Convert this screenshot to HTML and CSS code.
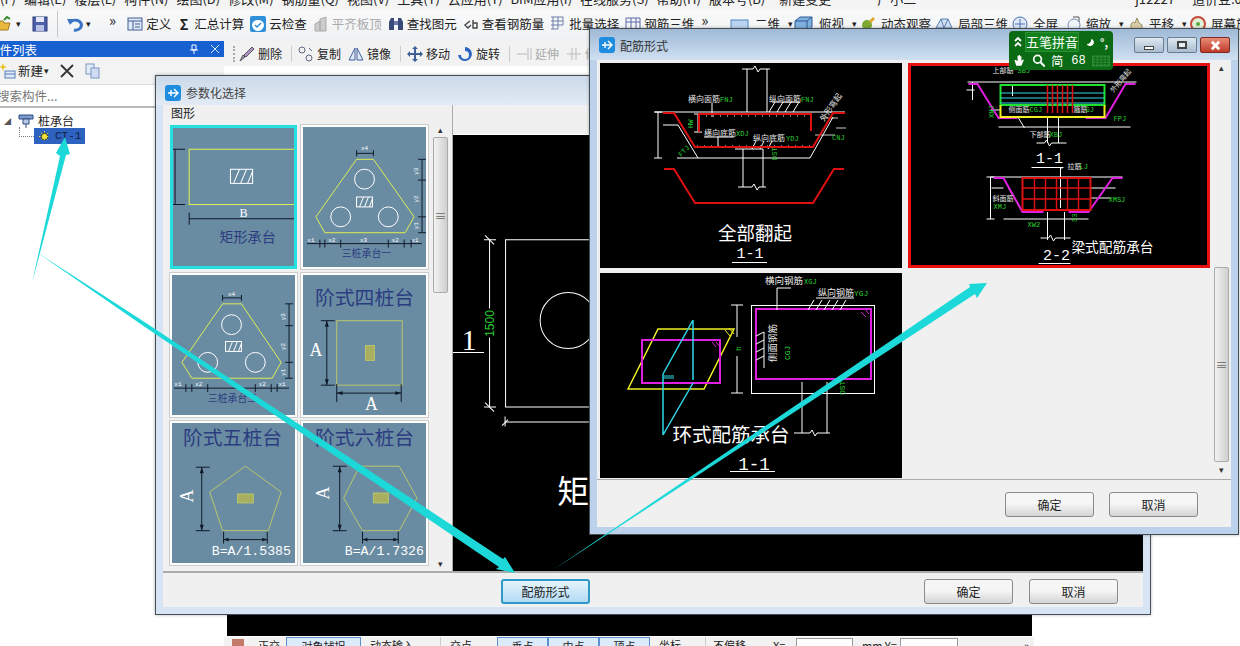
FILE: index.html
```html
<!DOCTYPE html>
<html lang="zh-CN">

<head>
    <meta charset="UTF-8">
    <title>参数化选择</title>
    <link rel="stylesheet" href="styles.css">
</head>

<body>
    <div class="app">
        <!-- 選單列，只露出文字下半部 -->
        <div class="menubar">
            <span>(F)</span><span>编辑(E)</span><span>楼层(L)</span><span>构件(N)</span><span>绘图(D)</span><span>修改(M)</span><span>钢筋量(Q)</span><span>视图(V)</span><span>工具(T)</span><span>云应用(Y)</span><span>BIM应用(I)</span><span>在线服务(S)</span><span>帮助(H)</span><span>版本号(B)</span><span class="menu-new">新建变更</span><span class="menu-user">广小二</span><span class="menu-login">j12227</span><span class="menu-coin">造价豆:0</span>
        </div>

        <!-- 主工具列 -->
        <div class="toolbar">
            <svg class="ic ic-open" viewBox="0 0 16 16"><path d="M0 5h6l1 2h6l-2 7H0z" fill="#e8b93c" stroke="#a37a1c"/><path d="M7 4l3-3 3 2" fill="none" stroke="#3b8b2e" stroke-width="2"/></svg>
            <span class="drop">▾</span>
            <svg class="ic ic-save" viewBox="0 0 16 16"><rect x="1" y="1" width="14" height="14" fill="#4d5fa8" stroke="#2c3a7a"/><rect x="4" y="1" width="8" height="5" fill="#e6e9f5"/><rect x="4" y="9" width="8" height="6" fill="#b7c1e6"/></svg>
            <span class="sep"></span>
            <svg class="ic" viewBox="0 0 16 16"><path d="M3 7a6 5 0 1 1 4 7" fill="none" stroke="#3c74c4" stroke-width="3"/><path d="M0 3l6 0-3 6z" fill="#3c74c4"/></svg>
            <span class="drop drop-b">▾</span>
            <span class="more">»</span>
            <span class="tool"><svg class="ic" viewBox="0 0 16 16"><rect x="1" y="2" width="14" height="12" fill="#dfe8f5" stroke="#44609a"/><path d="M1 5h14M6 5v9M8 8h5M8 11h5" stroke="#44609a" fill="none"/></svg>定义</span>
            <span class="tool"><b class="sigma">Σ</b>汇总计算</span>
            <span class="tool"><svg class="ic" viewBox="0 0 16 16"><rect x="0" y="0" width="16" height="16" rx="2" fill="#2f8fd8"/><path d="M2 9a6 5 0 0 1 12 0 4 4 0 0 1-12 0z" fill="#fff"/><path d="M5 9l2 2 4-4" fill="none" stroke="#2f8fd8" stroke-width="1.5"/></svg>云检查</span>
            <span class="tool is-off"><svg class="ic" viewBox="0 0 16 16"><path d="M2 15V8l5-3v10zM7 15V3l6-2v14z" fill="#ccc" stroke="#aaa"/></svg>平齐板顶</span>
            <span class="tool"><svg class="ic" viewBox="0 0 16 16"><path d="M1 14V6l2-4h3v12zM10 14V2h3l2 4v8z" fill="#3a4a78"/><rect x="6" y="5" width="4" height="4" fill="#6d7ba6"/></svg>查找图元</span>
            <span class="tool"><svg class="ic" viewBox="0 0 16 16"><path d="M7 5L2 9l3 3 3-3M10 4v8h4V7h-4" fill="none" stroke="#444" stroke-width="1.4"/></svg>查看钢筋量</span>
            <span class="tool"><svg class="ic" viewBox="0 0 16 16"><path d="M1 1h12M1 5h12M1 9h12M1 13h7M3 1v12M8 1v12M13 1v8" stroke="#6a7fa8" fill="none"/></svg>批量选择</span>
            <span class="tool"><svg class="ic" viewBox="0 0 16 16"><path d="M1 2h14v11H1zM1 6h14M6 2v11M11 2v11" stroke="#5a68a8" fill="none"/></svg>钢筋三维</span>
            <span class="more more-b">»</span>
            <div class="view-tools">
                <span class="tool"><svg class="ic ic-w" viewBox="0 0 20 16"><rect x="1" y="4" width="17" height="11" fill="#b9d3f0" stroke="#5585c4"/></svg>二维<span class="drop">▾</span></span>
                <span class="tool"><svg class="ic ic-w" viewBox="0 0 20 16"><path d="M1 5l5-4h12v10l-5 4H1z" fill="#7fb0e0" stroke="#2c5a92"/><path d="M1 5h12v10M13 5l5-4" fill="none" stroke="#2c5a92"/></svg>俯视<span class="drop">▾</span></span>
                <span class="tool"><svg class="ic" viewBox="0 0 16 16"><circle cx="7" cy="9" r="5" fill="#7fa832"/><path d="M9 5l4-4 2 2-4 4" fill="#e0a82c"/></svg>动态观察</span>
                <span class="tool"><svg class="ic ic-w" viewBox="0 0 20 16"><path d="M3 12l5-9h7l4 9z" fill="#cfe0f4" stroke="#5b7fb2"/><path d="M8 3l3 9M15 3l-4 9" stroke="#5b7fb2" fill="none"/></svg>局部三维</span>
                <span class="tool"><svg class="ic" viewBox="0 0 16 16"><circle cx="8" cy="8" r="7" fill="#dfe9f7" stroke="#4a6fb0"/><path d="M8 3v10M3 8h10" stroke="#4a6fb0"/></svg>全屏</span>
                <span class="tool"><svg class="ic" viewBox="0 0 16 16"><circle cx="9" cy="9" r="6" fill="#eef3fa" stroke="#7b93b8"/><path d="M8 1h6v5" fill="none" stroke="#555"/></svg>缩放<span class="drop">▾</span></span>
                <span class="tool"><svg class="ic" viewBox="0 0 16 16"><path d="M3 15V8l2-2 2 1 2-5 2 5 3 2v6z" fill="#d8cfa8" stroke="#9a8e60"/></svg>平移<span class="drop">▾</span></span>
                <span class="tool"><svg class="ic" viewBox="0 0 16 16"><circle cx="8" cy="8" r="7" fill="#dff0d8" stroke="#c84a3a" stroke-width="2"/><circle cx="8" cy="8" r="2" fill="#5aa83c"/></svg>屏幕旋转</span>
            </div>
        </div>

        <div class="work">
            <!-- 左側構件列表 -->
            <div class="side">
                <div class="side-head">
                    <span class="side-title">构件列表</span>
                    <span class="side-pin">
                        <svg class="pin" viewBox="0 0 10 10"><path d="M3 1h4v5H3zM1 6h8M5 6v4" fill="none" stroke="#fff"/></svg>
                        <svg class="pin" viewBox="0 0 10 10"><path d="M1 1l8 8M9 1l-8 8" stroke="#dfe8ff"/></svg>
                    </span>
                </div>
                <div class="side-tools">
                    <svg class="ic" viewBox="0 0 16 16"><path d="M3 0l1 3 3 1-3 1-1 3-1-3-3-1 3-1z" fill="#e8c21c"/><rect x="5" y="8" width="10" height="7" fill="#dfe9f7" stroke="#5a80b8"/><path d="M5 11h10" stroke="#5a80b8"/></svg>
                    <span class="side-new">新建</span><span class="drop">▾</span>
                    <svg class="ic" viewBox="0 0 16 16"><path d="M2 2l12 12M14 2L2 14" stroke="#333" stroke-width="1.8"/></svg>
                    <svg class="ic" viewBox="0 0 16 16"><rect x="2" y="1" width="8" height="10" fill="#e4ecf8" stroke="#7a96c4"/><rect x="7" y="5" width="8" height="10" fill="#cfdcf2" stroke="#7a96c4"/></svg>
                </div>
                <div class="side-search">搜索构件...</div>
                <div class="tree">
                    <div class="tree-row">
                        <span class="tree-arrow">◢</span>
                        <svg class="ic" viewBox="0 0 16 16"><path d="M1 2h14v4H1z" fill="#7c99c8" stroke="#2c4c86"/><path d="M5 6h6v5H5zM8 11v4" fill="#b8c8e4" stroke="#2c4c86"/></svg>
                        <span>桩承台</span>
                    </div>
                    <div class="tree-row tree-sub">
                        <span class="tree-line"></span>
                        <span class="tree-pick">
                            <svg class="gear" viewBox="0 0 12 12"><circle cx="6" cy="6" r="3.500" fill="#f4e23c" stroke="#3a3a10"/><path d="M6 0v12M0 6h12M2 2l8 8M10 2l-8 8" stroke="#f4e23c" stroke-dasharray="1.500 7"/></svg>
                            CT-1
                        </span>
                    </div>
                </div>
            </div>

            <!-- 繪圖區 -->
            <div class="main">
                <div class="edit-tools">
                    <span class="grip"></span>
                    <span class="tool"><svg class="ic" viewBox="0 0 16 16"><path d="M1 15l3-6 2 2zM5 9l8-8 2 2-8 8z" fill="#b094c8" stroke="#555"/></svg>删除</span>
                    <span class="sep-s"></span>
                    <span class="tool"><svg class="ic" viewBox="0 0 16 16"><circle cx="4" cy="4" r="3" fill="none" stroke="#5a6a80"/><circle cx="11" cy="12" r="3" fill="none" stroke="#5a6a80"/><path d="M11 2l3 3" stroke="#5a6a80"/></svg>复制</span>
                    <span class="tool"><svg class="ic" viewBox="0 0 16 16"><path d="M7 2L1 14h6zM9 2l6 12H9z" fill="#dfe8f5" stroke="#44609a"/></svg>镜像</span>
                    <span class="sep-s"></span>
                    <span class="tool"><svg class="ic" viewBox="0 0 16 16"><path d="M8 0l3 3H9v4h4V5l3 3-3 3V9H9v4h2l-3 3-3-3h2V9H3v2L0 8l3-3v2h4V3H5z" fill="#3e5f98"/></svg>移动</span>
                    <span class="tool"><svg class="ic" viewBox="0 0 16 16"><path d="M8 1v4a4 4 0 1 1-4 4H1a7 7 0 1 0 7-8z" fill="#2a66c0"/></svg>旋转</span>
                    <span class="sep-s"></span>
                    <span class="tool is-off"><svg class="ic" viewBox="0 0 16 16"><path d="M1 8h10M12 2v12M15 2v12" stroke="#bbb" fill="none"/></svg>延伸</span>
                    <span class="tool is-off"><svg class="ic" viewBox="0 0 16 16"><path d="M1 8h14M6 2v12M10 2v12" stroke="#bbb" fill="none"/></svg>修剪</span>
                </div>
                <div class="canvas"></div>
                <!-- 狀態工具列，視窗下緣只露出一小段 -->
                <div class="status-tools">
                    <span class="st-ic"></span>
                    <span>正交</span>
                    <span class="st-on">对象捕捉</span>
                    <span class="st-pad">动态输入</span>
                    <span class="st-sep"></span>
                    <span>交点</span>
                    <span class="st-on">垂点</span>
                    <span class="st-on">中点</span>
                    <span class="st-on">顶点</span>
                    <span class="st-pad">坐标</span>
                    <span class="st-sep"></span>
                    <span>不偏移</span>
                    <span>X=</span>
                    <span class="st-box"></span>
                    <span class="st-pad">mm Y=</span>
                    <span class="st-box"></span>
                    <span class="st-more">»</span>
                </div>
            </div>
        </div>

        <!-- 參數化選擇視窗 -->
        <div class="win win-param">
            <div class="win-title">
                <svg class="win-ic" viewBox="0 0 16 16"><rect width="16" height="16" rx="3" fill="#1e8de0"/><path d="M3 8h10M9 4l4 4-4 4M6 5v6" fill="none" stroke="#fff" stroke-width="1.400"/></svg>
                参数化选择
            </div>
            <div class="win-body">
                <div class="param-top">
                    <div class="gallery">
                        <div class="gallery-label">图形</div>
                        <div class="gallery-main">
                            <div class="thumbs">
                                <div class="thumb is-sel">
                                    <svg viewBox="173 128 120 137">
                                        <path d="M296 149H189V204H296" fill="none" stroke="#dfef50"/>
                                        <rect x="230" y="169" width="22" height="14" fill="none" stroke="#fff"/>
                                        <path d="M233 183l6-14M240 183l6-14M247 183l5-12" stroke="#fff"/>
                                        <path d="M172 149h13M175 149v55M172 204h13M189 212v12M189 218h104" stroke="#101828" fill="none"/>
                                        <text x="243" y="216" class="t-w t-serif" font-size="12">B</text>
                                        <text x="247" y="241" class="t-navy" font-size="14">矩形承台</text>
                                    </svg>
                                </div>
                                <div class="thumb">
                                    <svg viewBox="303 127 124 140">
                                        <path d="M357 159h17l41 58-9 16h-81l-9-16z" fill="none" stroke="#dfef50"/>
                                        <g fill="none" stroke="#fff"><circle cx="365" cy="179" r="10"/><circle cx="341" cy="217" r="10"/><circle cx="389" cy="217" r="10"/><rect x="357" y="197" width="16" height="10"/></g>
                                        <path d="M360 207l4-10M365 207l4-10M370 207l3-8" stroke="#fff"/>
                                        <path d="M357 150v6M374 150v6M357 153h17M423 159v74M419 159h8M419 180h8M419 217h8M419 233h8M307 244h116M320 240v8M325 240v8M341 240v8M389 240v8M405 240v8M412 240v8" stroke="#101828" fill="none"/>
                                        <text x="365" y="150" class="t-w t-mono" font-size="6">x4</text>
                                        <text x="311" y="242" class="t-w t-mono" font-size="6">x1</text>
                                        <text x="332" y="242" class="t-w t-mono" font-size="6">x2</text>
                                        <text x="364" y="242" class="t-w t-mono" font-size="6">x3</text>
                                        <text x="396" y="242" class="t-w t-mono" font-size="6">x2</text>
                                        <text x="416" y="242" class="t-w t-mono" font-size="6">x1</text>
                                        <text transform="translate(419 171) rotate(-90)" class="t-w t-mono" font-size="6">y3</text>
                                        <text transform="translate(419 199) rotate(-90)" class="t-w t-mono" font-size="6">y2</text>
                                        <text transform="translate(419 226) rotate(-90)" class="t-w t-mono" font-size="6">y1</text>
                                        <text x="367" y="258" class="t-navy" font-size="10">三桩承台一</text>
                                    </svg>
                                </div>
                                <div class="thumb">
                                    <svg viewBox="172 275 124 139">
                                        <path d="M223 303h19l40 59-9 16h-81l-10-16z" fill="none" stroke="#dfef50"/>
                                        <g fill="none" stroke="#fff"><circle cx="232" cy="324" r="10"/><circle cx="208" cy="362" r="10"/><circle cx="256" cy="362" r="10"/><rect x="226" y="341" width="16" height="10"/></g>
                                        <path d="M229 351l4-10M234 351l4-10M239 351l3-8" stroke="#fff"/>
                                        <path d="M223 294v6M242 294v6M223 297h19M290 303v75M286 303h8M286 325h8M286 362h8M286 378h8M174 388h116M186 384v8M192 384v8M208 384v8M256 384v8M272 384v8M278 384v8" stroke="#101828" fill="none"/>
                                        <text x="232" y="295" class="t-w t-mono" font-size="6">x4</text>
                                        <text x="178" y="386" class="t-w t-mono" font-size="6">x1</text>
                                        <text x="199" y="386" class="t-w t-mono" font-size="6">x2</text>
                                        <text x="263" y="386" class="t-w t-mono" font-size="6">x2</text>
                                        <text x="283" y="386" class="t-w t-mono" font-size="6">x1</text>
                                        <text transform="translate(286 316) rotate(-90)" class="t-w t-mono" font-size="6">y3</text>
                                        <text transform="translate(286 346) rotate(-90)" class="t-w t-mono" font-size="6">y2</text>
                                        <text transform="translate(286 372) rotate(-90)" class="t-w t-mono" font-size="6">y1</text>
                                        <text x="233" y="402" class="t-navy" font-size="10">三桩承台二</text>
                                    </svg>
                                </div>
                                <div class="thumb">
                                    <svg viewBox="303 275 124 139">
                                        <rect x="337" y="320" width="66" height="65" fill="none" stroke="#b8c66c"/>
                                        <rect x="366" y="345" width="9" height="15" fill="#a8b060" stroke="#b8c66c"/>
                                        <path d="M321 320h14M327 320v65M321 385h14M337 384v18M402 384v18M337 393h65" stroke="#101828" fill="none"/>
                                        <path d="M327 320l-2 6h4zM327 385l-2-6h4zM337 393l6-2v4zM402 393l-6-2v4z" fill="#101828"/>
                                        <text x="365" y="304" class="t-navy" font-size="20">阶式四桩台</text>
                                        <text x="316" y="356" class="t-w t-serif" font-size="18">A</text>
                                        <text x="372" y="410" class="t-w t-serif" font-size="18">A</text>
                                    </svg>
                                </div>
                                <div class="thumb">
                                    <svg viewBox="172 423 124 140">
                                        <path d="M246 466l36 26-13 39h-46l-13-39z" fill="none" stroke="#b8c66c"/>
                                        <rect x="238" y="494" width="16" height="9" fill="#a8b060" stroke="#b8c66c"/>
                                        <path d="M196 467h14M202 467v64M196 531h14M224 532v12M268 532v12M224 540h44" stroke="#101828" fill="none"/>
                                        <path d="M202 467l-2 6h4zM202 531l-2-6h4zM224 540l5-2v4zM268 540l-5-2v4z" fill="#101828"/>
                                        <text transform="translate(193 496) rotate(-90)" class="t-w t-serif" font-size="18">A</text>
                                        <text x="252" y="556" class="t-w t-mono" font-size="13.300">B=A/1.5385</text>
                                        <text x="233" y="445" class="t-navy" font-size="20">阶式五桩台</text>
                                    </svg>
                                </div>
                                <div class="thumb">
                                    <svg viewBox="303 423 124 140">
                                        <path d="M360 466h40l18 32-18 33h-37l-19-33z" fill="none" stroke="#b8c66c"/>
                                        <rect x="374" y="493" width="15" height="10" fill="#a8b060" stroke="#b8c66c"/>
                                        <path d="M333 466h14M340 466v65M333 531h14M363 532v12M399 532v12M363 540h36" stroke="#101828" fill="none"/>
                                        <path d="M340 466l-2 6h4zM340 531l-2-6h4zM363 540l5-2v4zM399 540l-5-2v4z" fill="#101828"/>
                                        <text transform="translate(329 493) rotate(-90)" class="t-w t-serif" font-size="18">A</text>
                                        <text x="385" y="556" class="t-w t-mono" font-size="13.300">B=A/1.7326</text>
                                        <text x="365" y="445" class="t-navy" font-size="20">阶式六桩台</text>
                                    </svg>
                                </div>
                            </div>
                            <div class="vscroll">
                                <span class="vs-up">▴</span>
                                <span class="vs-thumb vs-thumb-a">≡</span>
                                <span class="vs-rest"></span>
                                <span class="vs-down">▾</span>
                            </div>
                        </div>
                    </div>
                    <div class="preview">
                        <div class="preview-head"></div>
                        <!-- 預覽圖，右半被配筋形式視窗擋住 -->
                        <svg class="preview-draw" viewBox="453 135 689 435">
                            <g fill="none" stroke="#fff">
                                <path d="M505.500 239.500h335v167h-335zM484 239.500h12M484 406.500h12M489.500 239v69M489.500 337v70M453 352h31M505 421.500h335M505 416v10"/>
                                <path d="M485 235l9 9M485 402l9 9M502 425l6-6"/>
                                <circle cx="568" cy="320" r="28"/>
                            </g>
                            <text transform="translate(494 323) rotate(-90)" class="t-green t-sans" font-size="12">1500</text>
                            <text x="469" y="350" class="t-w t-serif" font-size="30">1</text>
                            <text x="557" y="502" class="t-w t-start" font-size="32">矩形承台</text>
                        </svg>
                    </div>
                </div>
                <div class="win-foot foot-param">
                    <button class="btn btn-focus">配筋形式</button>
                    <span class="foot-space"></span>
                    <button class="btn">确定</button>
                    <button class="btn">取消</button>
                </div>
            </div>
        </div>

        <!-- 配筋形式視窗 -->
        <div class="win win-rebar">
            <div class="win-title title-rebar">
                <svg class="win-ic" viewBox="0 0 16 16"><rect width="16" height="16" rx="3" fill="#1e8de0"/><path d="M3 8h10M9 4l4 4-4 4M6 5v6" fill="none" stroke="#fff" stroke-width="1.400"/></svg>
                配筋形式
                <span class="win-btns">
                    <span class="wb"><i class="wb-min"></i></span>
                    <span class="wb"><i class="wb-max"></i></span>
                    <span class="wb wb-close">
                        <svg viewBox="0 0 12 12"><path d="M2 2l8 8M10 2l-8 8" stroke="#fff" stroke-width="3"/></svg>
                    </span>
                </span>
            </div>
            <div class="win-body">
                <div class="rebar-main">
                    <div class="rebar-grid">
                        <div class="rb">
                            <svg viewBox="600 63 302 205">
                                <g fill="none" stroke="#fff">
                                    <path d="M655 112h190M742 69h11l2-3 3 6 2-3h10M747 69v43M767 69v43M658 112v46M654 112h8M654 158h8"/>
                                    <path d="M663 125h15l20 33h112l23-41M677 158h21M698 114v18M694 114h8M694 132h8"/>
                                    <path d="M743 149v38M763 149v38M738 187h14l2-3 3 6 2-3h7M735 149h28M712 103v14M769 112l6-10M777 112l6-10M785 112l6-10M793 112l6-10M772 102h28"/>
                                    <path d="M718 137v10M704 137h30M752 149l4-8M760 149l4-8M768 149l4-8"/>
                                    <path d="M824 118h14M836 128h10M826 125l-6 10M815 135h20" stroke-width="0.800"/>
                                </g>
                                <path d="M699 116h112M697 146h115" fill="none" stroke="#fff" stroke-dasharray="1 6"/>
                                <polyline points="663,113 674,113 695,147 813,147 833,113 845,113" fill="none" stroke="#e01010" stroke-width="2"/>
                                <polyline points="699,132 699,114 811,114 811,131" fill="none" stroke="#e01010" stroke-width="2"/>
                                <polyline points="664,169 674,169 695,203 813,203 834,169 844,169" fill="none" stroke="#e01010" stroke-width="2"/>
                                <text x="688" y="102" class="t-lb" font-size="8">横向面筋</text><text x="720" y="102" class="t-green t-lb" font-size="7">FNJ</text>
                                <text x="769" y="102" class="t-lb" font-size="8">纵向面筋</text><text x="801" y="102" class="t-green t-lb" font-size="7">FNJ</text>
                                <text x="704" y="136" class="t-lb" font-size="8">横向底筋</text><text x="736" y="136" class="t-green t-lb" font-size="7">XDJ</text>
                                <text x="753" y="141" class="t-lb" font-size="8">纵向底筋</text><text x="786" y="141" class="t-green t-lb" font-size="7">YDJ</text>
                                <text x="832" y="140" class="t-green t-lb" font-size="7">CNJ</text>
                                <text transform="translate(693 128) rotate(-90)" class="t-green t-lb" font-size="7">HW</text>
                                <text transform="translate(777 160) rotate(-90)" class="t-green t-lb" font-size="7">DST</text>
                                <text transform="translate(681 157) rotate(-45)" class="t-green t-lb" font-size="7">FTJ</text>
                                <text transform="translate(824 122) rotate(-55)" class="t-lb" font-size="8">外形弯起</text>
                                <text x="755" y="240" class="t-w" font-size="18.500">全部翻起</text>
                                <text x="750" y="258" class="t-w t-mono" font-size="15">1-1</text>
                                <path d="M732 262.500h35" stroke="#fff"/>
                            </svg>
                        </div>
                        <div class="rb is-picked">
                            <svg viewBox="908 63 301 205">
                                <path d="M967 82h169M998 127h132M966 90h8M972 82v18M1000 110h-10M1012 84v12M1047 118v25M1058 118v25M1036 143h8l2-3 3 6 2-3h15M1018 118l6 10" fill="none" stroke="#fff"/>
                                <polyline points="968,84 977,84 998,118 1017,118" fill="none" stroke="#e020e0" stroke-width="2"/>
                                <polyline points="1085,118 1105,118 1125,84 1135,84" fill="none" stroke="#e020e0" stroke-width="2"/>
                                <rect x="1000" y="85" width="104" height="20" fill="none" stroke="#20e030" stroke-width="2"/>
                                <path d="M1000 105v12h104v-12" fill="none" stroke="#f0f020" stroke-width="2"/>
                                <path d="M1000 93h104M1000 98h104M1000 103h104" stroke="#30d8e8"/>
                                <path d="M1047 85v28M1052 85v28M1057 85v28M1062 85v28M1067 85v28M1072 85v28" stroke="#e01010" stroke-width="1.500"/>
                                <text x="992" y="73" class="t-lb" font-size="7">上部筋</text><text x="1017" y="73" class="t-green t-lb" font-size="7">SBJ</text>
                                <text x="1008" y="112" class="t-lb" font-size="7">侧面筋</text><text x="1029" y="112" class="t-green t-lb" font-size="7">CGJ</text>
                                <text x="1073" y="112" class="t-lb" font-size="7">箍筋</text><text x="1085" y="112" class="t-green t-lb" font-size="7">GJ</text>
                                <text x="1029" y="137" class="t-lb" font-size="7">下部筋</text><text x="1049" y="137" class="t-green t-lb" font-size="7">XBJ</text>
                                <text x="1113" y="121" class="t-green t-lb" font-size="7">FPJ</text>
                                <text transform="translate(993 118) rotate(-90)" class="t-green t-lb" font-size="7">XNJ</text>
                                <text transform="translate(1113 93) rotate(-50)" class="t-lb" font-size="7">外形弯起</text>
                                <text x="1049" y="163" class="t-w t-mono" font-size="15">1-1</text>
                                <path d="M1031 167.500h32" stroke="#fff"/>
                                <path d="M990 177h132M986 177h8M986 219h8M990 177v42M1003 188h-12M1022 212l-14-24M1003 219h85M1047 212v28M1064 212v28M1040 238h8l2-3 3 6 2-3h15M1090 188h25M1090 198h20M1062 168h-2v40" fill="none" stroke="#fff"/>
                                <polyline points="993,178 1003,178 1022,212 1043,212" fill="none" stroke="#e020e0" stroke-width="2"/>
                                <polyline points="1068,212 1088,212 1112,178 1122,178" fill="none" stroke="#e020e0" stroke-width="2"/>
                                <rect x="1022" y="178" width="68" height="32" fill="none" stroke="#e01010" stroke-width="2"/>
                                <path d="M1034 178v32M1045 178v32M1056 178v32M1067 178v32M1078 178v32M1022 188h68M1022 199h68" stroke="#e01010" stroke-width="1.400"/>
                                <text x="1067" y="169" class="t-lb" font-size="7">拉筋</text><text x="1079" y="169" class="t-green t-lb" font-size="7">LJ</text>
                                <text x="992" y="201" class="t-lb" font-size="7">斜面筋</text><text x="993" y="209" class="t-green t-lb" font-size="7">XMJ</text>
                                <text x="1108" y="202" class="t-green t-lb" font-size="7">XMSJ</text>
                                <text x="1027" y="227" class="t-green t-lb" font-size="7">XW2</text>
                                <text transform="translate(1076 222) rotate(-90)" class="t-green t-lb" font-size="7">S3</text>
                                <text x="1056" y="260" class="t-w t-mono" font-size="15">2-2</text>
                                <path d="M1038 263.500h32" stroke="#fff"/>
                                <text x="1112" y="252" class="t-w" font-size="13.700">梁式配筋承台</text>
                            </svg>
                        </div>
                        <div class="rb">
                            <svg viewBox="600 273 302 205">
                                <path d="M628 389l30-60h76l-30 60z" fill="none" stroke="#f0f020" stroke-width="1.500"/>
                                <rect x="642" y="340" width="78" height="43" fill="none" stroke="#e020e0" stroke-width="2"/>
                                <path d="M693 320v60M693 320l-30 54M663 374v61M663 435l30-52" fill="none" stroke="#30d8e8" stroke-width="1.500"/>
                                <path d="M664 376h10M664 378h10" stroke="#30d8e8"/>
                                <path d="M725 330l5 6M729 328l5 6" stroke="#f0f020"/>
                                <path d="M712 342l4 5M716 342l4 5" stroke="#e020e0"/>
                                <rect x="751.500" y="305.500" width="123" height="88" fill="none" stroke="#fff"/>
                                <rect x="756" y="309" width="115" height="70" fill="none" stroke="#e020e0" stroke-width="2"/>
                                <path d="M864 308l5 6M861 312l5 5" stroke="#e020e0"/>
                                <path d="M802 382v51M827 382v51M794 433h16l2-3 3 6 2-3h13M737 305v32M737 356v37M731 305h12M731 393h12M777 288v22M777 288h14M808 310l6-10M816 310l6-10M824 310l6-10M832 310l6-10M840 310l6-10M816 298h38M756 336l8-4v36M756 344l8-4M756 352l8-4M756 360l8-4" fill="none" stroke="#fff"/>
                                <text x="765" y="284" class="t-lb" font-size="9.500">横向钢筋</text><text x="804" y="284" class="t-green t-lb" font-size="7">XGJ</text>
                                <text x="818" y="296" class="t-lb" font-size="9">纵向钢筋</text><text x="854" y="296" class="t-green t-lb" font-size="8">YGJ</text>
                                <text transform="translate(776 362) rotate(-90)" class="t-lb" font-size="9.500">侧面钢筋</text>
                                <text transform="translate(790 360) rotate(-90)" class="t-green t-lb" font-size="8">CGJ</text>
                                <text transform="translate(741 351) rotate(-90)" class="t-green t-lb" font-size="8">h</text>
                                <text transform="translate(845 395) rotate(-90)" class="t-green t-lb" font-size="8">DST</text>
                                <text x="731" y="442" class="t-w" font-size="19.500">环式配筋承台</text>
                                <text x="754" y="470" class="t-w t-mono" font-size="17.500">1-1</text>
                                <path d="M730 471.500h45" stroke="#fff"/>
                            </svg>
                        </div>
                    </div>
                    <div class="vscroll vs-rebar">
                        <span class="vs-up">▴</span>
                        <span class="vs-gap"></span>
                        <span class="vs-thumb vs-thumb-b">≡</span>
                        <span class="vs-down">▾</span>
                    </div>
                </div>
                <div class="win-foot foot-rebar">
                    <span class="foot-space"></span>
                    <button class="btn">确定</button>
                    <button class="btn">取消</button>
                </div>
            </div>
        </div>

        <!-- 輸入法浮動工具列 -->
        <div class="ime">
            <div class="ime-row">
                <svg class="ime-fold" viewBox="0 0 10 14"><path d="M2 6l3-3 3 3M2 11l3-3 3 3" fill="none" stroke="#fff" stroke-width="1.800"/></svg>
                <span class="ime-name">五笔拼音</span>
                <svg class="ime-moon" viewBox="0 0 12 12"><path d="M7 1a5 5 0 1 1-6 7 6 6 0 0 0 6-7z" fill="#fff"/></svg>
                <span class="ime-sym">°,</span>
            </div>
            <div class="ime-row ime-row-b">
                <svg class="ime-ic" viewBox="0 0 16 16"><path d="M3 8l2 6h6l3-7-2 0-1 2V3H9.500v5V1.500H8V8V2.500H6.500V9L4 7z" fill="#fff"/></svg>
                <svg class="ime-ic" viewBox="0 0 16 16"><circle cx="6.500" cy="6.500" r="4.500" fill="none" stroke="#fff" stroke-width="2"/><path d="M10 10l5 5" stroke="#fff" stroke-width="2.500"/></svg>
                <span>简</span>
                <span class="ime-full">68</span>
                <svg class="ime-key" viewBox="0 0 20 12"><rect width="20" height="12" fill="#2f8a35"/><path d="M1 3h18M1 6h18M1 9h18M4 1v10M8 1v10M12 1v10M16 1v10" stroke="#0b6a14"/></svg>
            </div>
        </div>

        <!-- 手動標註的青色箭頭 -->
        <svg class="arrows" viewBox="0 0 1240 646">
            <path d="M32 283L60 156 56 153 65 137 70 154 66 155z" fill="#1cd8d8"/>
            <path d="M35 251L146 323 503 559 505 557 515 573 496 569 499 567 145 327z" fill="#1cd8d8"/>
            <path d="M553 570L970 287 969 284 987 283 977 298 975 294z" fill="#1cd8d8"/>
        </svg>
    </div>
</body>

</html>
```

FILE: styles.css
```css
/* 基本樣式設定 */
* {
    box-sizing: border-box;
}

body {
    margin: 0;
    font-family: "Noto Sans CJK SC", "Liberation Sans", sans-serif;
    font-size: 12px;
    color: #222;
}

.app {
    position: relative;
    width: 1240px;
    height: 646px;
    overflow: hidden;
    background: #fff;
    display: flex;
    flex-direction: column;
}

.ic {
    width: 16px;
    height: 16px;
    flex: none;
}

.ic-w {
    width: 20px;
}

.drop {
    font-size: 9px;
    margin: 0 3px;
}

/* 選單列 */
.menubar {
    height: 10px;
    flex: none;
    overflow: hidden;
    display: flex;
    align-items: flex-end;
    gap: 8px;
    padding-bottom: 3px;
    background: #f4f4f4;
    font-size: 13px;
    line-height: 17px;
}

.menubar span {
    flex: none;
}

.menu-new {
    margin-left: 6px;
}

.menu-user {
    margin-left: 38px;
}

.menu-login {
    margin-left: 211px;
}

.menu-coin {
    margin-left: 9px;
}

/* 工具列 */
.toolbar {
    height: 31px;
    flex: none;
    display: flex;
    align-items: center;
    padding-bottom: 4px;
    white-space: nowrap;
    background: linear-gradient(#fafafa, #eef0f3);
    font-size: 12.500px;
}

.ic-open {
    margin-left: -3px;
}

.ic-save {
    margin-left: 8px;
}

.sep {
    width: 1px;
    height: 26px;
    margin: 0 9px;
    background: #c8c8c8;
}

.drop-b {
    margin-right: 6px;
}

.more {
    font-size: 15px;
    margin: -8px 11px 0 12px;
}

.more-b {
    margin: -8px 10px 0 1px;
}

.tool {
    display: flex;
    align-items: center;
    gap: 3px;
    margin-right: 6px;
    flex: none;
}

.is-off {
    color: #aaa;
}

.sigma {
    width: 14px;
    font-size: 14px;
    text-align: center;
}

/* 右半工具列，各欄寬度固定 */
.view-tools {
    display: grid;
    grid-template-columns: 64px 66px 73px 79px 53px 63px 62px 60px;
    margin-left: auto;
    width: 510px;
    flex: none;
}

.view-tools .tool {
    margin-right: 0;
    gap: 5px;
}

/* 工作區 */
.work {
    flex: 1;
    min-height: 0;
    display: flex;
}

.side {
    width: 224px;
    flex: none;
    background: #fff;
}

.side-head {
    height: 16px;
    display: flex;
    align-items: center;
    background: #1660d2;
    color: #fff;
    font-size: 12.500px;
    overflow: hidden;
}

.side-title {
    margin-left: -13px;
    flex: 1;
}

.side-pin {
    display: flex;
    gap: 11px;
    margin-right: 4px;
}

.pin {
    width: 10px;
    height: 10px;
}

.side-tools {
    height: 27px;
    display: flex;
    align-items: center;
    gap: 2px;
    background: #f3f3f3;
    font-size: 12.500px;
}

.side-tools .ic:nth-of-type(1) {
    margin-left: 0;
}

.side-tools .ic:nth-of-type(2) {
    margin-left: 5px;
}

.side-tools .ic:nth-of-type(3) {
    margin-left: 7px;
}

.side-tools .drop {
    margin: 0 3px 0 -1px;
}

.side-search {
    height: 24px;
    line-height: 22px;
    margin-left: -3px;
    border-bottom: 2px solid #bbb;
    border-top: 1px solid #ddd;
    color: #777;
    font-size: 12.500px;
}

.tree {
    padding: 5px 0 0 4px;
}

.tree-row {
    height: 15px;
    display: flex;
    align-items: center;
    gap: 4px;
}

.tree-row .ic {
    margin-left: 3px;
}

.tree-arrow {
    font-size: 7px;
    color: #555;
}

.tree-sub {
    height: 16px;
    padding-left: 15px;
    gap: 0;
}

.tree-line {
    width: 15px;
    height: 10px;
    margin-top: -9px;
    border-left: 1px dotted #777;
    border-bottom: 1px dotted #777;
}

.tree-pick {
    width: 51px;
    height: 16px;
    display: flex;
    align-items: center;
    gap: 5px;
    padding-left: 5px;
    background: #2e62c0;
    color: #10203c;
    font-family: "Liberation Mono", monospace;
    font-size: 11px;
}

.gear {
    width: 11px;
    height: 11px;
}

.main {
    width: 810px;
    flex: none;
    display: flex;
    flex-direction: column;
}

.edit-tools {
    height: 25px;
    flex: none;
    display: flex;
    align-items: center;
    gap: 4px;
    padding-left: 9px;
    white-space: nowrap;
    background: #f2f2f2;
    font-size: 12px;
}

.edit-tools .tool {
    margin-right: 3px;
}

.grip {
    width: 2px;
    height: 16px;
    border-left: 2px dotted #aaa;
}

.sep-s {
    width: 1px;
    height: 16px;
    margin: 0 2px;
    background: #ccc;
}

.canvas {
    flex: 1;
    margin: 16px 2px 1px 3px;
    background: #000;
}

.status-tools {
    height: 18px;
    flex: none;
    margin-bottom: -9px;
    padding-left: 8px;
    display: grid;
    grid-template-columns: 26px 28px 75px 79px 10px 47px 51px 51px 51px 55px 8px 60px 23px 57px 47px 58px 1fr;
    white-space: nowrap;
    background: #f2f2f2;
    font-size: 11px;
}

.st-ic {
    width: 12px;
    height: 12px;
    margin-top: 2px;
    background: #c47a6a;
}

.st-on {
    border: 1px solid #5b8fd0;
    background: #dcebfa;
    text-align: center;
}

.st-pad {
    padding-left: 9px;
}

.st-sep {
    width: 1px;
    height: 16px;
    background: #ccc;
}

.st-box {
    height: 16px;
    margin-top: 1px;
    border: 1px solid #999;
    background: #fff;
}

.st-more {
    padding-left: 66px;
}

/* 浮動視窗 */
.win {
    position: absolute;
    display: flex;
    flex-direction: column;
    border: 1px solid #444c55;
    background: #d6e4f3;
    box-shadow: 0 0 3px rgba(0, 0, 0, 0.3);
}

.win-param {
    left: 155px;
    top: 75px;
    width: 996px;
    height: 540px;
}

.win-rebar {
    left: 589px;
    top: 28px;
    width: 650px;
    height: 507px;
    background: #bcd2ea;
}

.win-title {
    height: 29px;
    flex: none;
    display: flex;
    align-items: center;
    gap: 5px;
    padding: 4px 0 0 9px;
    color: #444;
    background: linear-gradient(#cbd9e8, #e2ebf5);
}

.title-rebar {
    height: 31px;
    padding-top: 1px;
    background: linear-gradient(#9fb9d6, #cfe0f1);
    color: #333;
}

.win-ic {
    width: 16px;
    height: 16px;
}

.win-btns {
    margin-left: auto;
    margin-right: 8px;
    display: flex;
    gap: 3px;
}

.wb {
    width: 30px;
    height: 16px;
    display: flex;
    align-items: center;
    justify-content: center;
    border: 1px solid #6d7d90;
    border-radius: 2px;
    background: linear-gradient(#dfe8f2, #a9bcd0);
}

.wb-min {
    width: 10px;
    height: 4px;
    margin-top: 5px;
    border: 1px solid #444;
    background: #fff;
}

.wb-max {
    width: 10px;
    height: 8px;
    border: 2px solid #444;
    background: #e6eef6;
}

.wb-close {
    border-color: #7a2a20;
    background: linear-gradient(#e88c78, #c03a28);
}

.wb-close svg {
    width: 11px;
    height: 11px;
}

.win-body {
    flex: 1;
    min-height: 0;
    margin: 0 7px 7px;
    display: flex;
    flex-direction: column;
    background: #f0f0f0;
}

.param-top {
    flex: 1;
    min-height: 0;
    display: flex;
}

.win-foot {
    flex: none;
    display: flex;
    align-items: center;
    background: #f0f0f0;
}

.foot-param {
    height: 36px;
    padding: 2px 25px 0 338px;
    border-top: 2px solid #aaa;
    gap: 16px;
}

.foot-rebar {
    height: 48px;
    padding: 2px 33px 0 0;
    gap: 15px;
    border-top: 1px solid #aaa;
}

.foot-space {
    flex: 1;
}

.btn {
    width: 89px;
    height: 25px;
    padding: 0;
    font: inherit;
    color: #222;
    border: 1px solid #8a8a8a;
    border-radius: 3px;
    background: linear-gradient(#f6f6f6 45%, #d4d4d4);
}

.btn-focus {
    border: 2px solid #2f9ac8;
    background: linear-gradient(#e6f4fc, #b4daf4);
}

/* 圖形清單 */
.gallery {
    width: 289px;
    flex: none;
    display: flex;
    flex-direction: column;
}

.gallery-label {
    height: 17px;
    line-height: 16px;
    padding-left: 8px;
    flex: none;
}

.gallery-main {
    flex: 1;
    min-height: 0;
    display: flex;
    overflow: hidden;
    padding-left: 7px;
}

.thumbs {
    width: 258px;
    flex: none;
    display: grid;
    grid-template-columns: 127px 127px;
    grid-auto-rows: 148px;
    gap: 0 4px;
    padding-top: 3px;
}

.thumb {
    height: 144px;
    border: 2px solid #fff;
    outline: 1px solid #ccc;
    background: #6a8ca3;
}

.thumb.is-sel {
    border: 3px solid #25e0e0;
    outline: none;
}

.thumb svg {
    display: block;
    width: 100%;
    height: 100%;
}

/* SVG 文字 */
svg text {
    text-anchor: middle;
}

svg .t-start,
svg .t-lb {
    text-anchor: start;
}

.t-w {
    fill: #fff;
}

.t-navy {
    fill: #2b3d80;
}

.t-green {
    fill: #28d030;
}

.t-mono {
    font-family: "Liberation Mono", monospace;
}

.t-serif {
    font-family: "Liberation Serif", serif;
}

.t-sans {
    font-family: "Liberation Sans", sans-serif;
}

.t-lb {
    fill: #e8e8e8;
}

.t-green.t-lb {
    fill: #28d030;
    font-family: "Liberation Mono", monospace;
}

/* 捲軸 */
.vscroll {
    width: 17px;
    flex: none;
    margin-left: 4px;
    display: flex;
    flex-direction: column;
    align-items: center;
    font-size: 9px;
    color: #333;
    background: #f0f0f0;
}

.vs-up,
.vs-down {
    height: 15px;
    line-height: 15px;
    flex: none;
}

.vs-thumb {
    width: 15px;
    flex: none;
    display: flex;
    align-items: center;
    justify-content: center;
    color: #666;
    font-size: 12px;
    border: 1px solid #aaa;
    border-radius: 2px;
    background: linear-gradient(90deg, #f2f2f2, #cfcfcf);
}

.vs-thumb-a {
    height: 156px;
}

.vs-rest {
    flex: 1;
}

.vs-gap {
    height: 192px;
    flex: none;
}

.vs-thumb-b {
    height: 195px;
}

.vs-rebar {
    margin-left: 1px;
    height: 100%;
}

/* 右側預覽 */
.preview {
    flex: 1;
    min-width: 0;
    display: flex;
    flex-direction: column;
    border-left: 1px solid #aaa;
}

.preview-head {
    height: 30px;
    flex: none;
    border-bottom: 1px solid #fff;
}

.preview-draw {
    flex: 1;
    min-height: 0;
    width: 100%;
    background: #000;
}

/* 配筋形式清單 */
.rebar-main {
    flex: 1;
    min-height: 0;
    display: flex;
    padding-left: 3px;
}

.rebar-grid {
    width: 612px;
    flex: none;
    display: grid;
    grid-template-columns: 302px 302px;
    grid-auto-rows: 205px;
    gap: 5px 6px;
    padding-top: 3px;
}

.rb {
    background: #000;
}

.rb svg {
    display: block;
    width: 100%;
    height: 100%;
}

.rb.is-picked {
    outline: 3px solid #e81010;
    outline-offset: -3px;
}

/* 輸入法工具列 */
.ime {
    position: absolute;
    left: 1009px;
    top: 31px;
    width: 104px;
    height: 39px;
    padding: 1px 3px;
    border-radius: 4px;
    background: #0b6a14;
    color: #fff;
}

.ime-row {
    height: 20px;
    display: flex;
    align-items: center;
}

.ime-row-b {
    height: 17px;
    gap: 6px;
    font-size: 12px;
}

.ime-fold {
    width: 12px;
    height: 14px;
    margin-right: 1px;
}

.ime-name {
    width: 54px;
    height: 20px;
    line-height: 18px;
    text-align: center;
    font-size: 13px;
    border: 1px solid #2c8f36;
    background: #12801c;
}

.ime-moon {
    width: 9px;
    height: 9px;
    margin-left: 7px;
}

.ime-sym {
    margin-left: 5px;
    font-size: 11px;
    font-weight: bold;
    line-height: 14px;
    white-space: nowrap;
}

.ime-ic {
    width: 15px;
    height: 15px;
}

.ime-full {
    font-family: "Liberation Mono", monospace;
    margin-left: 2px;
}

.ime-key {
    width: 20px;
    height: 12px;
}

/* 箭頭覆蓋層 */
.arrows {
    position: absolute;
    left: 0;
    top: 0;
    width: 1240px;
    height: 646px;
    pointer-events: none;
}
```
